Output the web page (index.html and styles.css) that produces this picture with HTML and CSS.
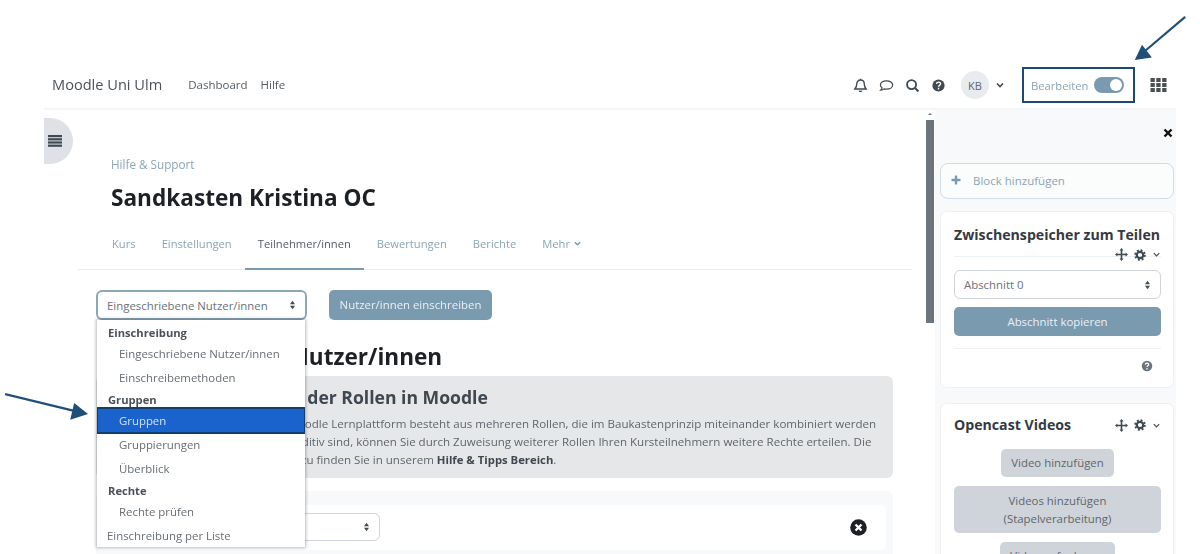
FILE: index.html
```html
<!DOCTYPE html>
<html lang="de">
<head>
<meta charset="utf-8">
<title>Sandkasten Kristina OC: Teilnehmer/innen</title>
<link rel="stylesheet" href="styles.css">
</head>
<body>
<div class="shot">
  <div class="frame">
    <header class="nav">
      <span class="brand">Moodle Uni Ulm</span>
      <a class="navlink first">Dashboard</a>
      <a class="navlink">Hilfe</a>
      <div class="nav-right">
        <svg class="ni" viewBox="0 0 16 16"><path d="M8 2.2c-2.6 0-4 2-4 4.3 0 3-1.3 4.2-2 5.2h12c-.7-1-2-2.2-2-5.2C12 4.200 10.600 2.200 8 2.200zM6.500 13.500c.3 1 2.700 1 3 0M8 .8v1.400" fill="none" stroke="#3f4a52" stroke-width="1.500"/></svg>
        <svg class="ni" viewBox="0 0 16 16"><path d="M8 3C4.200 3 1.500 5 1.500 7.500c0 1.300.7 2.300 1.700 3-.2 1-.8 1.800-1.400 2.400 1.500-.1 2.800-.7 3.600-1.300.8.200 1.700.3 2.600.3 3.800 0 6.500-2 6.500-4.400S11.800 3 8 3z" fill="none" stroke="#3f4a52" stroke-width="1.300"/></svg>
        <svg class="ni" viewBox="0 0 16 16"><circle cx="7" cy="7" r="4.800" fill="none" stroke="#3f4a52" stroke-width="2"/><path d="M10.500 10.500l3.800 3.800" stroke="#3f4a52" stroke-width="2.200"/></svg>
        <svg class="ni" viewBox="0 0 16 16"><circle cx="8" cy="8" r="6.500" fill="#3f4a52"/><path d="M5.900 6.300c.2-2.600 4.300-2.500 4.300-.1 0 1.600-2.200 1.600-2.200 3.100M8 10.500v1.700" fill="none" stroke="#fff" stroke-width="1.500"/></svg>
        <span class="avatar">KB</span>
        <svg class="chev" viewBox="0 0 10 10"><path d="M2 3.500l3 3 3-3" fill="none" stroke="#3f4a52" stroke-width="1.600"/></svg>
        <div class="editbox">
          <span>Bearbeiten</span>
          <span class="toggle"><span class="knob"></span></span>
        </div>
        <svg class="grid" viewBox="0 0 16 16" fill="#4a4f4f"><rect x="0" y="1" width="4.300" height="4"/><rect x="5.800" y="1" width="4.300" height="4"/><rect x="11.700" y="1" width="4.300" height="4"/><rect x="0" y="6" width="4.300" height="4"/><rect x="5.800" y="6" width="4.300" height="4"/><rect x="11.700" y="6" width="4.300" height="4"/><rect x="0" y="11" width="4.300" height="4"/><rect x="5.800" y="11" width="4.300" height="4"/><rect x="11.700" y="11" width="4.300" height="4"/></svg>
      </div>
    </header>
    <div class="body">
      <main class="main">
        <button class="sidetoggle" aria-label="Kursindex">
          <svg viewBox="0 0 14 12" fill="#3f4a52"><rect y="0" width="14" height="2.200"/><rect y="3.200" width="14" height="2.200"/><rect y="6.400" width="14" height="2.200"/><rect y="9.600" width="14" height="2.200"/></svg>
        </button>
        <div class="head">
          <div class="crumb">Hilfe &amp; Support</div>
          <h1 class="title">Sandkasten Kristina OC</h1>
        </div>
        <nav class="tabs">
          <a class="tab">Kurs</a>
          <a class="tab">Einstellungen</a>
          <a class="tab active">Teilnehmer/innen</a>
          <a class="tab">Bewertungen</a>
          <a class="tab">Berichte</a>
          <a class="tab">Mehr <svg class="chev-s" viewBox="0 0 10 10"><path d="M2 3.500l3 3 3-3" fill="none" stroke="#7a9aaf" stroke-width="1.600"/></svg></a>
        </nav>
        <div class="content">
          <div class="toolbar">
            <div class="selwrap">
              <div class="select focus">
                <span>Eingeschriebene Nutzer/innen</span>
                <svg class="updown" viewBox="0 0 8 12" fill="#3f4a52"><path d="M4 1l3 4H1zM4 11L1 7h6z"/></svg>
              </div>
              <div class="menu">
                <div class="mhead">Einschreibung</div>
                <div class="mitem">Eingeschriebene Nutzer/innen</div>
                <div class="mitem">Einschreibemethoden</div>
                <div class="mhead">Gruppen</div>
                <div class="mitem selected">Gruppen</div>
                <div class="mitem">Gruppierungen</div>
                <div class="mitem">Überblick</div>
                <div class="mhead">Rechte</div>
                <div class="mitem">Rechte prüfen</div>
                <div class="mplain">Einschreibung per Liste</div>
              </div>
            </div>
            <button class="btn primary enrol">Nutzer/innen einschreiben</button>
          </div>
          <h2 class="h2">Eingeschriebene Nutzer/innen</h2>
          <section class="alert">
            <h3 class="alert-h">Übersicht zu Rechten der Rollen in Moodle</h3>
            <p class="alert-p">Das gesamte Rechtekonzept der Moodle Lernplattform besteht aus mehreren Rollen, die im Baukastenprinzip miteinander kombiniert werden<br>können. Da alle diese Rollen klar additiv sind, können Sie durch Zuweisung weiterer Rollen Ihren Kursteilnehmern weitere Rechte erteilen. Die<br>Weiterführende Informationen hierzu finden Sie in unserem <b>Hilfe &amp; Tipps Bereich</b>.</p>
          </section>
          <section class="filter">
            <div class="filter-in">
              <div class="select small"><span>Alle</span><svg class="updown" viewBox="0 0 8 12" fill="#3f4a52"><path d="M4 1l3 4H1zM4 11L1 7h6z"/></svg></div>
              <svg class="xcirc" viewBox="0 0 16 16"><circle cx="8" cy="8" r="7.800" fill="#1d2125"/><path d="M5.200 5.200l5.600 5.600M10.800 5.200l-5.600 5.600" stroke="#fff" stroke-width="2.200"/></svg>
            </div>
          </section>
        </div>
      </main>
      <aside class="drawer">
        <div class="closerow"><svg class="x" viewBox="0 0 10 10"><path d="M1.500 1.500l7 7M8.500 1.500l-7 7" stroke="#111" stroke-width="2.400"/></svg></div>
        <div class="addblock"><svg class="plus" viewBox="0 0 10 10"><path d="M5 .5v9M.5 5h9" stroke="#7a9aaf" stroke-width="2.400"/></svg><span>Block hinzufügen</span></div>
        <section class="card first-card">
          <h4 class="ctitle">Zwischenspeicher zum Teilen</h4>
          <div class="ctools under">
            <svg class="move" viewBox="0 0 16 16"><path d="M8 0l2.500 3H9v4h4V5.500L16 8l-3 2.500V9H9v4h1.500L8 16l-2.500-3H7V9H3v1.500L0 8l3-2.500V7h4V3H5.500z" fill="#3f4a52"/></svg>
            <svg class="gear" viewBox="0 0 16 16"><circle cx="8" cy="8" r="4.300" fill="none" stroke="#3f4a52" stroke-width="3"/><circle cx="8" cy="8" r="6.500" fill="none" stroke="#3f4a52" stroke-width="2.400" stroke-dasharray="2.600 2.500"/></svg>
            <svg class="chev-t" viewBox="0 0 10 10"><path d="M2 3.500l3 3 3-3" fill="none" stroke="#3f4a52" stroke-width="1.300"/></svg>
          </div>
          <div class="select side"><span>Abschnitt 0</span><svg class="updown" viewBox="0 0 8 12" fill="#3f4a52"><path d="M4 1l3 4H1zM4 11L1 7h6z"/></svg></div>
          <button class="btn primary wide">Abschnitt kopieren</button>
          <div class="cfoot"><svg class="q" viewBox="0 0 16 16"><circle cx="8" cy="8" r="7" fill="#6c757d"/><path d="M5.700 6.200c.2-2.800 4.600-2.700 4.600-.1 0 1.700-2.300 1.700-2.300 3.300M8 10.700v1.800" fill="none" stroke="#fff" stroke-width="1.600"/></svg></div>
        </section>
        <section class="card">
          <div class="chead">
            <h4 class="ctitle">Opencast Videos</h4>
            <div class="ctools">
              <svg class="move" viewBox="0 0 16 16"><path d="M8 0l2.500 3H9v4h4V5.500L16 8l-3 2.500V9H9v4h1.500L8 16l-2.500-3H7V9H3v1.500L0 8l3-2.500V7h4V3H5.500z" fill="#3f4a52"/></svg>
              <svg class="gear" viewBox="0 0 16 16"><circle cx="8" cy="8" r="4.300" fill="none" stroke="#3f4a52" stroke-width="3"/><circle cx="8" cy="8" r="6.500" fill="none" stroke="#3f4a52" stroke-width="2.400" stroke-dasharray="2.600 2.500"/></svg>
              <svg class="chev-t" viewBox="0 0 10 10"><path d="M2 3.500l3 3 3-3" fill="none" stroke="#3f4a52" stroke-width="1.300"/></svg>
            </div>
          </div>
          <div class="vbtns">
            <button class="btn grey">Video hinzufügen</button>
            <button class="btn grey full">Videos hinzufügen<br>(Stapelverarbeitung)</button>
            <button class="btn grey">Video aufnehmen</button>
          </div>
        </section>
      </aside>
    </div>
    <div class="scrollbar"><span class="sb-arrow"></span><span class="sb-thumb"></span></div>
  </div>
  <svg class="arrow arrow-top" viewBox="0 0 60 50"><path d="M58 1L12 40" stroke="#1f4e79" stroke-width="2.400" fill="none"/><path d="M2 49L10 32 21 46z" fill="#1f4e79"/></svg>
  <svg class="arrow arrow-left" viewBox="0 0 84 28"><path d="M0 1L70 18" stroke="#1f4e79" stroke-width="2.400" fill="none"/><path d="M84 21L66 27 70 10z" fill="#1f4e79"/></svg>
</div>
</body>
</html>
```

FILE: styles.css
```css
* { box-sizing: border-box; }
html, body { margin: 0; padding: 0; background: #fff; }
body { font-family: "Open Sans", "Noto Sans", sans-serif; font-size: 12px; color: #4a5258; }
.shot { position: relative; width: 1200px; height: 554px; overflow: hidden; filter: blur(0.6px); }
.frame { position: relative; margin-left: 44px; width: 1132px; padding-top: 67px; }

.nav { display: flex; align-items: center; height: 43px; border-bottom: 2px solid #f3f5f6; padding: 0 0 5px 8px; }
.brand { font-size: 14.600px; color: #4a5258; margin: 0 26px 2px 0; }
.navlink { font-size: 11.500px; color: #555d63; margin: 0 13px 2px 0; }
.nav-right { margin-left: auto; display: flex; align-items: center; height: 36px; padding-right: 9px; }
.ni { width: 15px; height: 15px; margin-right: 11px; }
.avatar { width: 28px; height: 28px; border-radius: 50%; background: #e9ecef; color: #5c656b; font-size: 11px; display: flex; align-items: center; justify-content: center; margin-left: 4px; margin-right: 6px; }
.chev { width: 10px; height: 10px; margin-right: 17px; }
.editbox { display: flex; align-items: center; width: 113px; height: 36px; border: 2px solid #1c4a72; padding-left: 7px; color: #8ba5b6; font-size: 11.200px; margin-right: 15px; }
.toggle { display: block; width: 30px; height: 16px; background: #7a9aaf; border-radius: 8px; margin-left: 6px; padding: 2px 2px 2px 16px; }
.knob { display: block; width: 12px; height: 12px; background: #fff; border-radius: 50%; }
.grid { width: 17px; height: 16px; }

.body { display: flex; align-items: flex-start; }
.main { position: relative; width: 891px; padding: 45px 23px 0 34px; }
.sidetoggle { position: absolute; left: 0; top: 8px; width: 29px; height: 46px; border: 0; padding: 0 0 0 4px; background: #dee2e6; border-radius: 0 23px 23px 0; display: flex; align-items: center; }
.sidetoggle svg { width: 14px; height: 12px; }
.head { padding-left: 33px; }
.crumb { font-size: 11.700px; line-height: 18px; color: #8ba5b6; }
.title { margin: 7px 0 8px; font-size: 22.600px; line-height: 36px; font-weight: 700; color: #1d2125; }
.tabs { display: flex; padding-left: 21px; height: 46px; border-bottom: 1px solid #e9ecef; }
.tab { display: block; height: 46px; padding: 11px 13px 0; line-height: 18px; font-size: 11.200px; color: #8ba5b6; }
.tab.active { color: #555d63; border-bottom: 2px solid #7a9aaf; }
.chev-s { width: 9px; height: 9px; }

.content { padding: 20px 19px 0 18px; }
.toolbar { display: flex; align-items: flex-start; gap: 22px; }
.selwrap { position: relative; width: 211px; }
.select { display: flex; align-items: center; justify-content: space-between; background: #fff; border: 1px solid #ced4da; border-radius: 6px; color: #6a7278; font-size: 11.400px; height: 30px; padding: 0 9px; }
.select.focus { border: 2px solid #8ba8bb; }
.updown { width: 7px; height: 10px; flex: none; }
.menu { position: absolute; left: 1px; top: 30px; width: 208px; height: 227px; background: #fff; z-index: 5; box-shadow: 0 0 3px 1px rgba(0, 0, 0, .28); padding-top: 3px; }
.mhead { height: 20px; line-height: 20px; padding-left: 11px; font-size: 11.200px; font-weight: 700; color: #4a5258; }
.mitem, .mplain { height: 23.500px; line-height: 21px; font-size: 11.400px; color: #666e74; }
.mitem { padding-left: 22px; }
.mplain { padding-left: 10px; }
.mitem.selected { background: #1a62cc; color: #d4e2f5; border: 2px solid #143f6a; border-left-width: 1px; border-right-width: 1px; padding-left: 21px; height: 27px; margin-top: -3px; line-height: 23px; }

.btn { border: 0; border-radius: 5px; font-family: inherit; font-size: 11.400px; line-height: 18px; padding: 5px 10px; }
.btn.primary { background: #7a9aaf; color: #e9f0f4; }
.enrol { width: 163px; height: 30px; padding: 0; white-space: nowrap; }
.h2 { margin: 19px 0 1px; font-size: 22.600px; line-height: 36px; font-weight: 700; color: #1d2125; padding-left: 4px; white-space: nowrap; }
.alert { background: #e6e7e9; border-radius: 6px; height: 102px; padding: 8px 15px 0; }
.alert-h { margin: 0 0 5px 5px; font-size: 17.600px; line-height: 26px; font-weight: 700; color: #3f4850; white-space: nowrap; }
.alert-p { margin: 0; font-size: 11.550px; line-height: 18px; color: #5e666c; white-space: nowrap; }
.alert-p b { font-size: 11.300px; color: #3f4850; }
.filter { margin-top: 13px; height: 80px; background: #f8f9fa; border-radius: 6px; padding: 14px 7px 0 1px; }
.filter-in { display: flex; align-items: center; justify-content: space-between; height: 45px; background: #fff; border-radius: 6px; padding: 0 19px 1px 0; }
.select.small { width: 283px; height: 28px; }
.select.small span { visibility: hidden; }
.xcirc { width: 17px; height: 17px; }

.drawer { width: 241px; height: 460px; background: #f8f9fa; padding: 0 2px 0 5px; }
.closerow { display: flex; justify-content: flex-end; align-items: center; height: 53px; padding: 0 1px 7px 0; }
.x { width: 10px; height: 10px; }
.addblock { display: flex; align-items: center; height: 36px; border: 1.500px solid #cfdde6; border-radius: 8px; padding: 0 0 2px 10px; color: #8ba5b6; font-size: 11.500px; background: #fbfcfc; }
.plus { width: 10px; height: 10px; margin-right: 12px; }
.card { background: #fff; border: 1px solid #eef0f2; border-radius: 7px; margin-top: 12px; padding: 12px 12px 0 13px; }
.first-card { height: 177px; padding-top: 14px; margin-bottom: 15px; }
.ctitle { margin: 0; font-size: 14.150px; line-height: 18px; font-weight: 700; color: #343a40; white-space: nowrap; }
.ctools { display: flex; align-items: center; gap: 6px; }
.ctools.under { justify-content: flex-end; align-items: flex-start; height: 10px; margin-top: 3px; border-bottom: 1px solid #eef0f2; }
.ctools.under svg { margin-top: 1px; flex: none; }
.ctools.under .chev-t { margin-top: 3px; }
.ctools.under .gear { margin-top: 2px; }
.move { width: 13px; height: 13px; }
.gear { width: 12px; height: 12px; }
.chev-t { width: 9px; height: 9px; }
.select.side { margin-top: 13px; height: 29px; }
.btn.wide { display: block; width: 100%; height: 29px; margin-top: 8px; }
.cfoot { display: flex; justify-content: flex-end; margin-top: 12px; border-top: 1px solid #eef0f2; padding: 11px 8px 0 0; }
.q { width: 12px; height: 12px; }
.chead { display: flex; justify-content: space-between; align-items: center; height: 18px; }
.vbtns { display: flex; flex-direction: column; align-items: center; gap: 9px; margin-top: 15px; }
.btn.grey { background: #ced4da; color: #5e666c; height: 28px; padding: 5px 10px; }
.btn.grey.full { width: 100%; height: 47px; }

.scrollbar { position: absolute; left: 882px; top: 110px; width: 8px; display: flex; flex-direction: column; align-items: center; }
.sb-arrow { width: 0; height: 0; border: 2px solid transparent; border-bottom-color: #6c757d; margin-top: 1px; margin-bottom: 5px; }
.sb-thumb { display: block; width: 8px; height: 203px; background: #6c757d; }

.arrow { position: absolute; }
.arrow-top { left: 1133px; top: 16px; width: 54px; height: 45px; }
.arrow-left { left: 5px; top: 393px; width: 83px; height: 28px; }
```
